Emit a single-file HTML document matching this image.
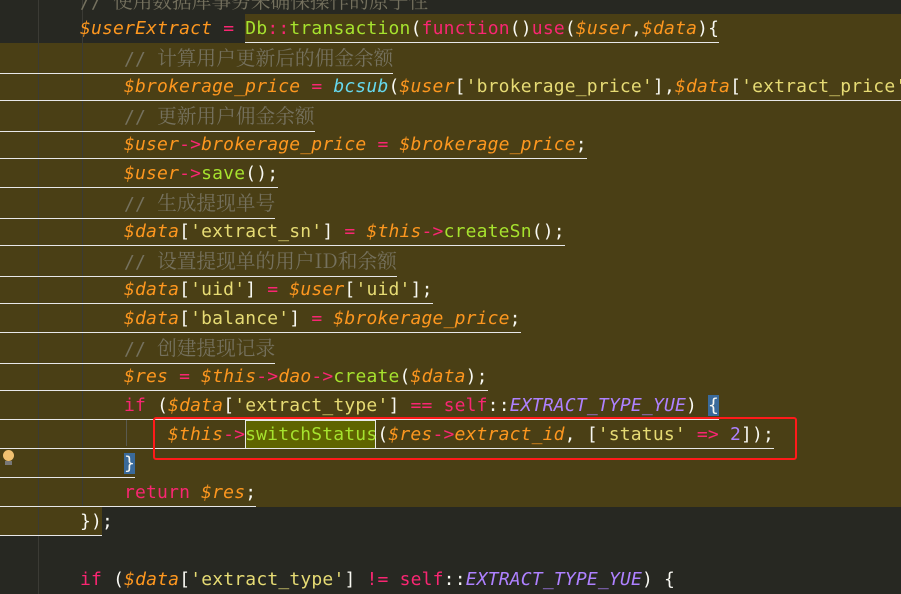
<!DOCTYPE html>
<html><head><meta charset="utf-8"><style>
body{margin:0;width:901px;height:594px;overflow:hidden;background:#272822;position:relative;font-family:"DejaVu Sans Mono","Liberation Mono","Noto Sans CJK SC",monospace;font-size:18px;letter-spacing:0.18px;color:#f8f8f2}
.bg{position:absolute;background:#4a3f15}
.ln{position:absolute;left:0;height:29px;line-height:29px;white-space:pre}
.u{display:inline-block;border-bottom:1px solid #e8e8e8;line-height:27px}
.v{color:#fd971f;font-style:italic}
.k{color:#f92672}
.f{color:#a6e22e}
.s{color:#e6db74}
.c{color:#75715e}
.cj{font-family:"Noto Serif CJK SC","Noto Sans CJK SC",serif;font-size:19.7px;letter-spacing:0}
.b{color:#66d9ef;font-style:italic}
.p{color:#ae81ff;font-style:italic}
.n{color:#ae81ff}
.vl{position:absolute;top:0;width:1px;height:594px;background:#3b3b35}
</style></head><body>
<div class="bg" style="left:0;top:43px;width:901px;height:464px"></div>
<div class="bg" style="left:245px;top:14px;width:656px;height:29px"></div>
<div class="bg" style="left:0;top:507px;width:102px;height:29px"></div>
<div class="vl" style="left:38px"></div>
<div class="vl" style="left:82px;height:507px"></div>
<div class="ln" style="top:-15px"><span class="c" style="padding-left:80px">// <span class="cj">使用数据库事务来确保操作的原子性</span></span></div>
<div class="ln" style="top:14px;padding-left:80px"><span class="v">$userExtract</span> <span class="k">=</span> <span class="u"><span class="f">Db</span><span class="k">::</span><span class="f">transaction</span>(<span class="k">function</span>()<span class="k">use</span>(<span class="v">$user</span>,<span class="v">$data</span>){</span></div>
<div class="ln" style="top:43px"><span class="u" style="padding-left:124px"><span class="c">// <span class="cj">计算用户更新后的佣金余额</span></span></span></div>
<div class="ln" style="top:72px"><span class="u" style="padding-left:124px"><span class="v">$brokerage_price</span> <span class="k">=</span> <span class="b">bcsub</span>(<span class="v">$user</span>[<span class="s">'brokerage_price'</span>],<span class="v">$data</span>[<span class="s">'extract_price'</span>]</span></div>
<div class="ln" style="top:101px"><span class="u" style="padding-left:124px"><span class="c">// <span class="cj">更新用户佣金余额</span></span></span></div>
<div class="ln" style="top:130px"><span class="u" style="padding-left:124px"><span class="v">$user</span><span class="k">-&gt;</span><span class="v">brokerage_price</span> <span class="k">=</span> <span class="v">$brokerage_price</span>;</span></div>
<div class="ln" style="top:159px"><span class="u" style="padding-left:124px"><span class="v">$user</span><span class="k">-&gt;</span><span class="f">save</span>();</span></div>
<div class="ln" style="top:188px"><span class="u" style="padding-left:124px"><span class="c">// <span class="cj">生成提现单号</span></span></span></div>
<div class="ln" style="top:217px"><span class="u" style="padding-left:124px"><span class="v">$data</span>[<span class="s">'extract_sn'</span>] <span class="k">=</span> <span class="v">$this</span><span class="k">-&gt;</span><span class="f">createSn</span>();</span></div>
<div class="ln" style="top:246px"><span class="u" style="padding-left:124px"><span class="c">// <span class="cj">设置提现单的用户ID和余额</span></span></span></div>
<div class="ln" style="top:275px"><span class="u" style="padding-left:124px"><span class="v">$data</span>[<span class="s">'uid'</span>] <span class="k">=</span> <span class="v">$user</span>[<span class="s">'uid'</span>];</span></div>
<div class="ln" style="top:304px"><span class="u" style="padding-left:124px"><span class="v">$data</span>[<span class="s">'balance'</span>] <span class="k">=</span> <span class="v">$brokerage_price</span>;</span></div>
<div class="ln" style="top:333px"><span class="u" style="padding-left:124px"><span class="c">// <span class="cj">创建提现记录</span></span></span></div>
<div class="ln" style="top:362px"><span class="u" style="padding-left:124px"><span class="v">$res</span> <span class="k">=</span> <span class="v">$this</span><span class="k">-&gt;</span><span class="v">dao</span><span class="k">-&gt;</span><span class="f">create</span>(<span class="v">$data</span>);</span></div>
<div class="ln" style="top:391px"><span class="u" style="padding-left:124px"><span class="k">if</span> (<span class="v">$data</span>[<span class="s">'extract_type'</span>] <span class="k">==</span> <span class="k">self</span>::<span class="p">EXTRACT_TYPE_YUE</span>) <span style="background:#3a6a9a">{</span></span></div>
<div style="position:absolute;left:245px;top:420px;width:129px;height:27px;background:#5f6400;border:1px solid #e8e8e8"></div>
<div class="ln" style="top:420px"><span class="u" style="padding-left:168px"><span class="v">$this</span><span class="k">-&gt;</span><span class="f">switchStatus</span>(<span class="v">$res</span><span class="k">-&gt;</span><span class="v">extract_id</span>, [<span class="s">'status'</span> <span class="k">=&gt;</span> <span class="n">2</span>]);</span></div>
<div style="position:absolute;left:153px;top:417px;width:640px;height:39px;border:2px solid #ff1a1a;border-radius:3px"></div>
<div style="position:absolute;left:126px;top:420px;width:1px;height:26px;background:#5a5a50"></div>
<div class="ln" style="top:449px"><span class="u" style="padding-left:124px"><span style="background:#3a6a9a">}</span></span></div>
<div style="position:absolute;left:3px;top:450px;width:11px;height:11px;border-radius:50%;background:#f0c070"></div>
<div style="position:absolute;left:5px;top:461px;width:7px;height:4px;background:#777"></div>
<div class="ln" style="top:478px"><span class="u" style="padding-left:124px"><span class="k">return</span> <span class="v">$res</span>;</span></div>
<div class="ln" style="top:507px"><span class="u" style="padding-left:80px">})</span>;</div>
<div class="ln" style="top:565px;padding-left:80px"><span class="k">if</span> (<span class="v">$data</span>[<span class="s">'extract_type'</span>] <span class="k">!=</span> <span class="k">self</span>::<span class="p">EXTRACT_TYPE_YUE</span>) {</div>
</body></html>
